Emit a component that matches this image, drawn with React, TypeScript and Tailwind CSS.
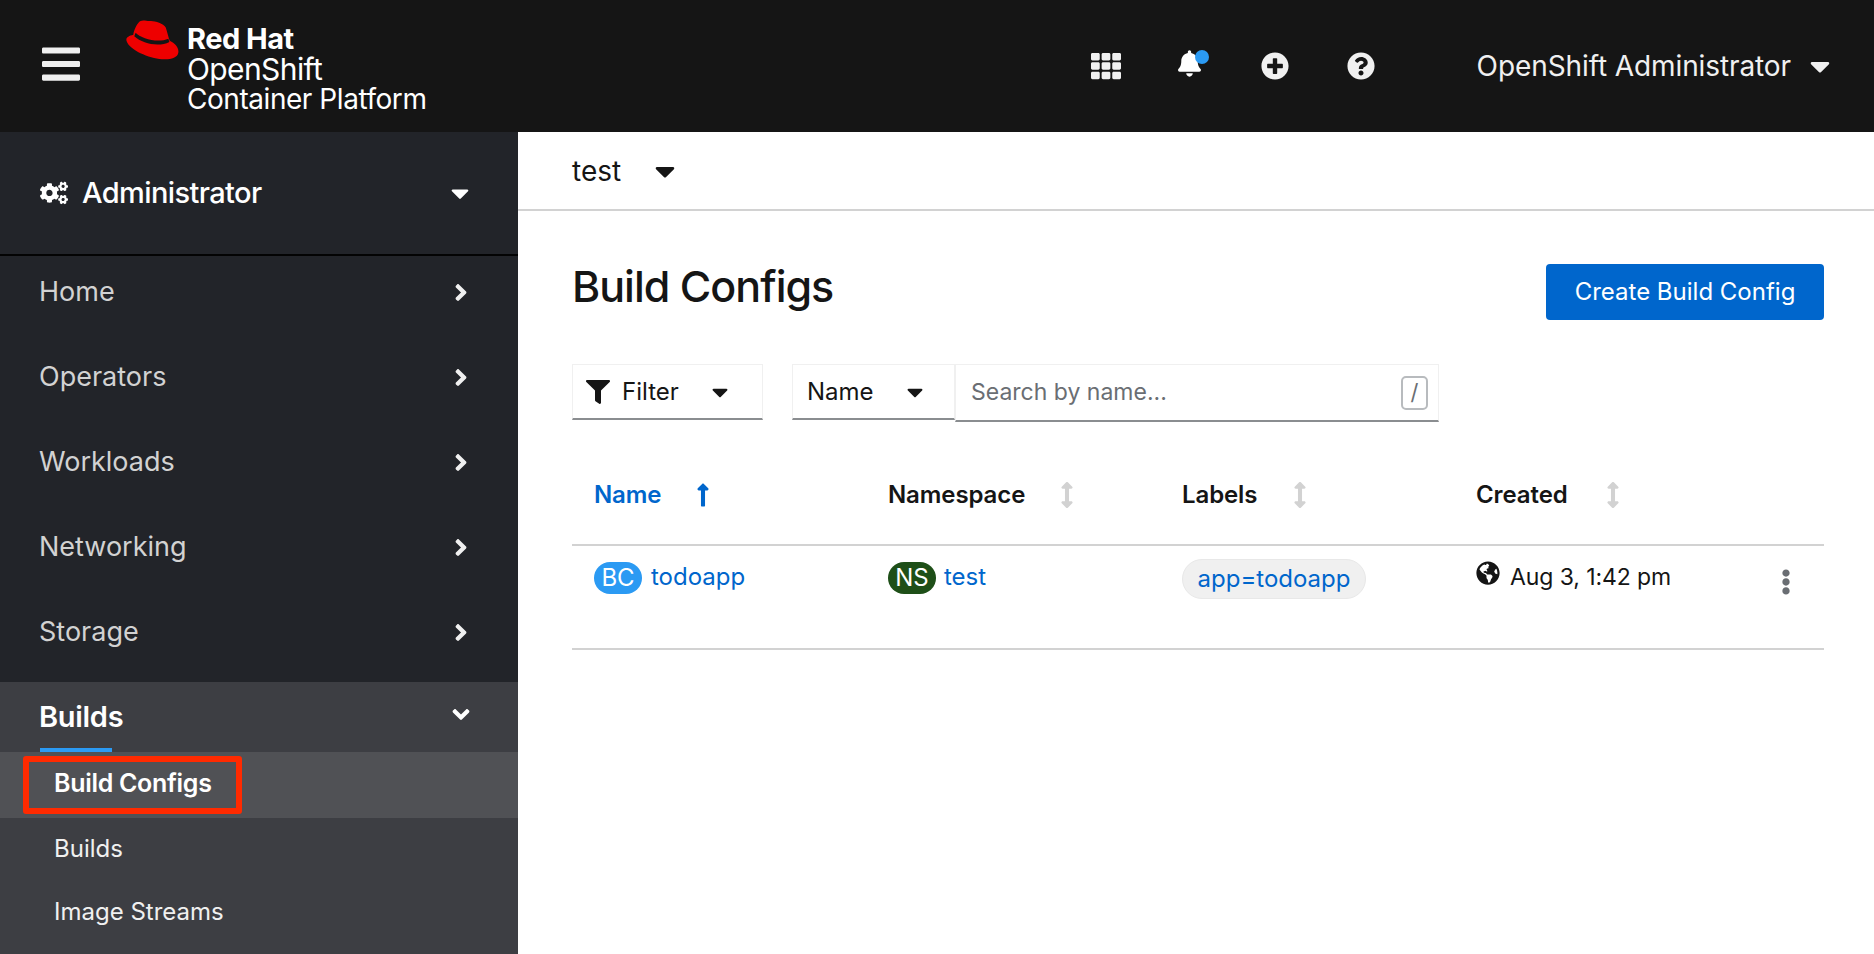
import React from 'react';
import {
  FaAngleDown,
  FaAngleRight,
  FaArrowsAltV,
  FaBars,
  FaBell,
  FaCaretDown,
  FaCogs,
  FaEllipsisV,
  FaFilter,
  FaGlobeAmericas,
  FaLongArrowAltUp,
  FaPlusCircle,
  FaQuestionCircle,
  FaTh,
} from 'react-icons/fa';

const navItems = ['Home', 'Operators', 'Workloads', 'Networking', 'Storage'];

const RedHatLogo = () => (
  <svg viewBox="0 0 160 120" className="w-[53px] h-[40px] shrink-0">
    <path
      fill="#e00"
      d="M44 3C52-1 60 3 72 3C84 1 112 10 120 22C124 34 128 52 132 62C148 70 160 82 158 98C156 116 130 120 108 118C70 116 10 90 2 64C-2 52 8 48 22 44C24 30 34 8 44 3Z"
    />
    <path fill="#151515" d="M29 38C45 55 95 70 128 56L131 66C100 82 50 72 25 49Z" />
  </svg>
);

const Masthead = () => (
  <header className="h-[132px] shrink-0 bg-[#151515] flex items-center text-[#f0f0f0]">
    <FaBars className="ml-[42px] -mt-[4px] w-[38px] h-[44px] shrink-0" />
    <div className="ml-[46px] self-start mt-[20px] flex">
      <RedHatLogo />
      <div className="ml-[8px] mt-[4px] text-white leading-[30px]">
        <div className="font-bold text-[29px] tracking-[-0.5px]">Red Hat</div>
        <div className="text-[30px] tracking-[-0.6px]">OpenShift</div>
        <div className="text-[28px] tracking-[-0.45px]">Container Platform</div>
      </div>
    </div>
    <div className="ml-auto flex items-center mr-[44px]">
      <FaTh className="w-[30px] h-[30px] text-[#f0f0f0]" />
      <div className="relative ml-[54px] w-[28px] h-[30px]">
        <FaBell className="ml-[3px] -mt-[1px] w-[23px] h-[27px] text-white" />
        <span className="absolute left-[20px] -top-[1px] w-[14px] h-[14px] rounded-full bg-[#2b9af3]" />
      </div>
      <FaPlusCircle className="ml-[58px] w-[28px] h-[28px] text-[#f0f0f0]" />
      <FaQuestionCircle className="ml-[58px] w-[28px] h-[28px] text-[#f0f0f0]" />
      <span className="ml-[102px] text-[28px] leading-[36px] tracking-[-0.1px]">OpenShift Administrator</span>
      <FaCaretDown className="ml-[19px] w-[20px] h-[32px] text-[#f0f0f0]" />
    </div>
  </header>
);

const Sidebar = () => (
  <aside className="w-[518px] shrink-0 bg-[#222429] text-[#d2d2d2] flex flex-col overflow-hidden">
    <div className="h-[124px] shrink-0 border-b-2 border-[#030303] flex items-center pl-[40px] pr-[49px] text-white">
      <FaCogs className="w-[28px] h-[24px]" />
      <span className="ml-[14px] text-[29px] font-medium tracking-[-0.6px]">Administrator</span>
      <FaCaretDown className="ml-auto w-[18px] h-[30px]" />
    </div>
    <nav className="flex flex-col gap-[13px] pb-[14px]">
      {navItems.map((item) => (
        <div key={item} className="h-[72px] flex items-center pl-[39px] pr-[50px] text-[27px]">
          <span>{item}</span>
          <FaAngleRight className="ml-auto w-[14px] h-[27px] text-[#f0f0f0]" />
        </div>
      ))}
    </nav>
    <div className="bg-[#3d3e43] flex-1 text-white">
      <div className="relative h-[70px] flex items-center pl-[39px] pr-[48px]">
        <span className="text-[29px] font-semibold tracking-[-0.3px]">Builds</span>
        <FaAngleDown className="ml-auto -mt-[6px] w-[18px] h-[27px]" />
        <span className="absolute left-[40px] bottom-0 w-[72px] h-[4px] bg-[#2b9af3]" />
      </div>
      <div className="relative h-[66px] bg-[#505155] flex items-center pl-[54px] pb-[2px] text-[25px] font-semibold tracking-[-0.3px]">
        Build Configs
        <span className="absolute left-[23px] top-[4px] w-[219px] h-[58px] border-[6px] border-[#ff2a00] rounded-[3px]" />
      </div>
      <div className="h-[62px] flex items-center pl-[54px] text-[24px] text-[#f0f0f0]">Builds</div>
      <div className="h-[64px] flex items-center pl-[54px] text-[24px] text-[#f0f0f0]">Image Streams</div>
    </div>
  </aside>
);

const Toolbar = () => (
  <div className="mt-[44px] flex items-start text-[24px] text-[#151515]">
    <div className="w-[191px] h-[56px] border border-[#f0f0f0] border-b-[2px] border-b-[#8a8d90] flex items-center pl-[13px]">
      <FaFilter className="w-[24px] h-[24px]" />
      <span className="ml-[12px]">Filter</span>
      <FaCaretDown className="ml-[33px] w-[16px] h-[26px]" />
    </div>
    <div className="ml-[29px] w-[163px] h-[56px] border border-[#f0f0f0] border-b-[2px] border-b-[#8a8d90] flex items-center pl-[14px]">
      <span>Name</span>
      <FaCaretDown className="ml-[33px] w-[16px] h-[26px]" />
    </div>
    <div className="w-[484px] h-[58px] border border-[#f0f0f0] border-b-[2px] border-b-[#8a8d90] flex items-center pl-[15px] text-[23px] text-[#6a6e73]">
      <span>Search by name...</span>
      <span className="ml-auto mr-[10px] w-[27px] h-[34px] border-2 border-[#b8bbbe] rounded-[5px] flex items-center justify-center text-[22px]">/</span>
    </div>
  </div>
);

const SortHead = ({ label, active, gap }: { label: string; active?: boolean; gap: string }) => (
  <div className="w-[294px] flex items-center text-[24px] font-semibold tracking-[-0.1px]">
    <span className={active ? 'text-[#06c]' : 'text-[#151515]'}>{label}</span>
    {active ? (
      <FaLongArrowAltUp className={`${gap} w-[16px] h-[26px] text-[#06c]`} />
    ) : (
      <FaArrowsAltV className={`${gap} w-[16px] h-[26px] text-[#d2d2d2]`} />
    )}
  </div>
);

const Badge = ({ text, color }: { text: string; color: string }) => (
  <span className={`w-[48px] h-[32px] rounded-full ${color} text-white text-[24px] flex items-center justify-center shrink-0`}>
    {text}
  </span>
);

const BuildTable = () => (
  <div className="mt-[50px]">
    <div className="h-[74px] border-b-[2px] border-[#d2d2d2] pl-[22px] flex items-start pt-[5px]">
      <SortHead label="Name" active gap="ml-[34px]" />
      <SortHead label="Namespace" gap="ml-[34px]" />
      <SortHead label="Labels" gap="ml-[35px]" />
      <SortHead label="Created" gap="ml-[37px]" />
    </div>
    <div className="h-[104px] border-b-[2px] border-[#d2d2d2] pl-[22px] flex items-start pt-[15px] text-[24px] text-[#06c]">
      <div className="w-[294px] flex items-center gap-[9px]">
        <Badge text="BC" color="bg-[#2b9af3]" />
        <span className="-mt-[2px]">todoapp</span>
      </div>
      <div className="w-[294px] flex items-center gap-[8px]">
        <Badge text="NS" color="bg-[#1e4f18]" />
        <span className="-mt-[2px]">test</span>
      </div>
      <div className="w-[294px]">
        <span className="-mt-[2px] h-[40px] w-[184px] rounded-full bg-[#f0f0f0] border border-[#e8e8e8] flex items-center justify-center">
          app=todoapp
        </span>
      </div>
      <div className="flex-1 flex items-start text-[#151515]">
        <FaGlobeAmericas className="w-[24px] h-[24px] shrink-0" />
        <span className="ml-[10px] leading-[32px] text-[23px] tracking-[-0.1px]">Aug 3, 1:42 pm</span>
        <FaEllipsisV className="ml-auto mr-[30px] mt-[8px] w-[16px] h-[26px] text-[#6a6e73]" />
      </div>
    </div>
  </div>
);

export default function App() {
  return (
    <div className="h-screen w-full flex flex-col overflow-hidden bg-white font-['Inter','Liberation_Sans',sans-serif]">
      <Masthead />
      <div className="flex flex-1 min-h-0">
        <Sidebar />
        <main className="flex-1 flex flex-col">
          <div className="h-[79px] shrink-0 border-b-2 border-[#d2d2d2] flex items-center pl-[54px] text-[28px] text-[#151515]">
            <span>test</span>
            <FaCaretDown className="ml-[34px] w-[20px] h-[32px]" />
          </div>
          <div className="px-[54px] pr-[50px] flex-1">
            <div className="mt-[53px] flex items-start justify-between h-[56px]">
              <h1 className="text-[43px] leading-[56px] font-medium tracking-[-1px] text-[#151515] -mt-[6px]">Build Configs</h1>
              <button className="w-[278px] h-[56px] rounded-[4px] bg-[#06c] text-white text-[24px]">Create Build Config</button>
            </div>
            <Toolbar />
            <BuildTable />
          </div>
        </main>
      </div>
    </div>
  );
}
